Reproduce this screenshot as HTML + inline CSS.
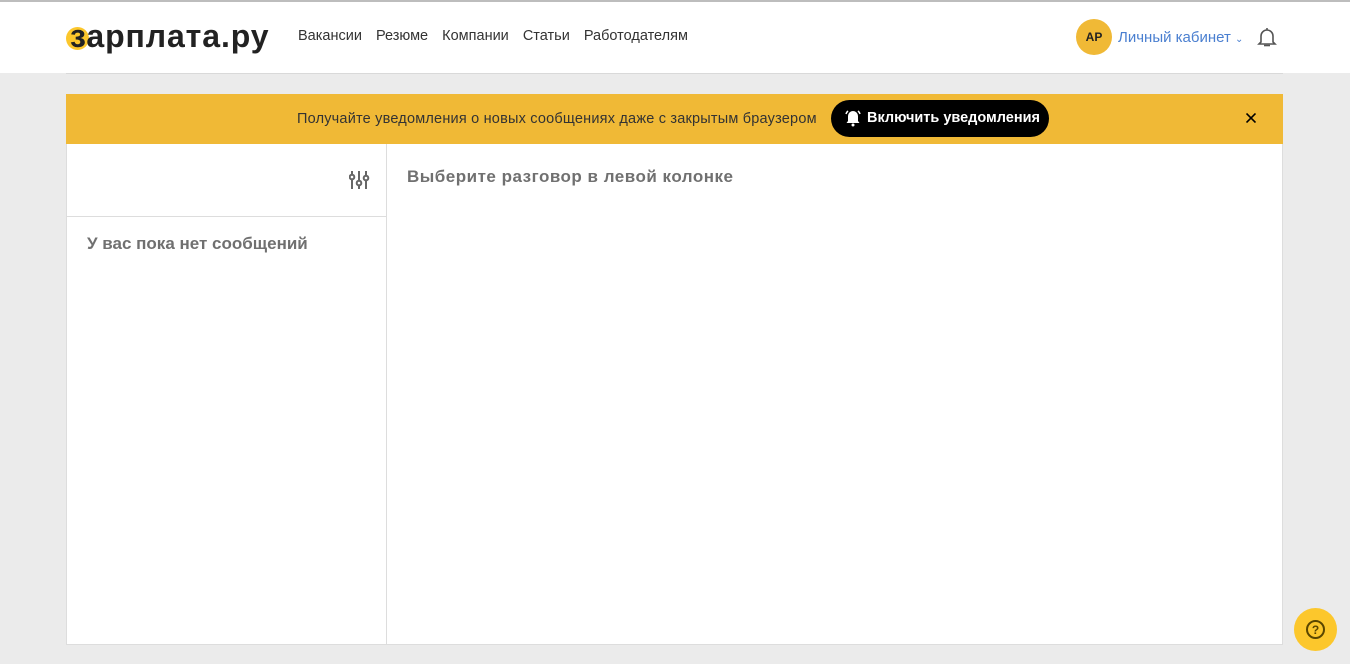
<!DOCTYPE html>
<html><head><meta charset="utf-8"><style>
*{margin:0;padding:0;box-sizing:border-box}
body{width:1350px;height:664px;background:#ebebeb;font-family:"Liberation Sans","DejaVu Sans",sans-serif;position:relative;overflow:hidden}
.hdr{position:absolute;left:0;top:0;width:1350px;height:73px;background:#fff;border-top:2px solid #bdbdbd}
.hline{position:absolute;left:66px;top:73px;width:1217px;height:1px;background:#d9d9d9}
.logo{position:absolute;left:66px;top:18px}
.logo .c{position:absolute;left:0;top:9px;width:23px;height:23px;border-radius:50%;background:#fcc72c}
.logo .t{position:relative;font-weight:bold;font-size:32px;color:#222;left:4px;letter-spacing:0.9px}
.nav{position:absolute;left:298px;top:28px;font-size:14.5px;color:#333}
.nav span{margin-right:10px}
.av{position:absolute;left:1076px;top:19px;width:36px;height:36px;border-radius:50%;background:#f0b936;font-size:12px;font-weight:bold;color:#222;text-align:center;line-height:36px}
.lk{position:absolute;left:1118px;top:29px;font-size:15px;color:#4a7fd0}
.banner{position:absolute;left:66px;top:94px;width:1217px;height:50px;background:#f0b936}
.banner .txt{position:absolute;left:231px;top:17px;font-size:14.5px;color:#333;letter-spacing:0.2px}
.btn{position:absolute;left:765px;top:6px;width:218px;height:37px;border-radius:19px;background:#000;color:#fff;font-size:14.5px;font-weight:bold;line-height:37px;padding-left:36px}
.panel{position:absolute;left:66px;top:144px;width:1217px;height:501px;background:#fff;border:1px solid #ddd;border-top:none}
.left{position:absolute;left:0;top:0;width:320px;height:500px;border-right:1px solid #ddd}
.div{position:absolute;left:0;top:72px;width:320px;height:1px;background:#ddd}
.h{font-weight:bold;font-size:17px;color:#707070;position:absolute}
.help{position:absolute;left:1294px;top:608px;width:43px;height:43px;border-radius:50%;background:#fcc72c}
</style></head><body>
<div class="hdr"></div><div class="hline"></div>
<div class="logo"><div class="c"></div><div class="t">зарплата.ру</div></div>
<div class="nav"><span>Вакансии</span> <span>Резюме</span> <span>Компании</span> <span>Статьи</span> <span>Работодателям</span></div>
<div class="av">АР</div>
<div class="lk">Личный кабинет <span style="font-size:10px;color:#4a7fd0">&#8964;</span></div>
<svg style="position:absolute;left:1257px;top:26px" width="20" height="22" viewBox="0 0 20 22"><path d="M10 2v2M4 16V10a6 6 0 0 1 12 0v6l2 2H2z" fill="none" stroke="#555" stroke-width="1.6"/><path d="M7 19.5h6" stroke="#555" stroke-width="1.6"/></svg>
<div class="banner">
<div class="txt">Получайте уведомления о новых сообщениях даже с закрытым браузером</div>
<div class="btn"><svg style="position:absolute;left:13px;top:9px" width="18" height="18" viewBox="0 0 18 18"><path d="M9 2a5 5 0 0 0-5 5v5l-1.5 2h13L14 12V7a5 5 0 0 0-5-5z" fill="#fff"/><circle cx="9" cy="16" r="1.5" fill="#fff"/><path d="M2 5a6 6 0 0 1 2-3M16 5a6 6 0 0 0-2-3" stroke="#fff" stroke-width="1.5" fill="none"/></svg>Включить уведомления</div>
<svg style="position:absolute;left:1180px;top:19px" width="10" height="10" viewBox="0 0 10 10"><path d="M0.5 0.5l9 9M9.5 0.5l-9 9" stroke="#000" stroke-width="1.6"/></svg>
</div>
<div class="panel">
<div class="left">
<svg style="position:absolute;left:282px;top:25px" width="22" height="22" viewBox="0 0 22 22" stroke="#666" stroke-width="2" fill="#fff"><path d="M3 2v18M10 2v18M17 2v18"/><circle cx="3" cy="8" r="2.3"/><circle cx="10" cy="14" r="2.3"/><circle cx="17" cy="9" r="2.3"/></svg>
<div class="div"></div>
<div class="h" style="left:20px;top:90px">У вас пока нет сообщений</div>
</div>
<div class="h" style="left:340px;top:23px;letter-spacing:0.5px">Выберите разговор в левой колонке</div>
</div>
<div class="help"><svg width="43" height="43" viewBox="0 0 43 43"><circle cx="21.5" cy="21.5" r="8.5" fill="none" stroke="#5a4600" stroke-width="2"/><text x="21.5" y="26" text-anchor="middle" font-family="Liberation Sans" font-weight="bold" font-size="12" fill="#5a4600">?</text></svg></div>
</body></html>
